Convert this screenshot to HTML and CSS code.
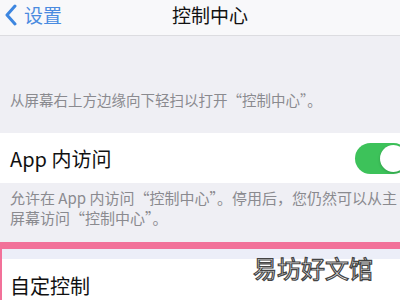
FILE: index.html
```html
<!DOCTYPE html>
<html lang="zh-CN">
<head>
    <meta charset="UTF-8">
    <meta name="viewport" content="width=device-width, initial-scale=1.0">
    <title>控制中心</title>
    <link rel="stylesheet" href="styles.css">
</head>
<body>
    <div class="screen">
        <div class="nav-bar">
            <div class="nav-back">
                <svg class="chevron" width="14" height="22" viewBox="0 0 14 22">
                    <path d="M11 2 L3 11 L11 20" fill="none" stroke="#3d86e0" stroke-width="3" stroke-linecap="round" stroke-linejoin="round"/>
                </svg>
                <span>设置</span>
            </div>
            <div class="nav-title">控制中心</div>
        </div>

        <div class="group-header">从屏幕右上方边缘向下轻扫以打开“控制中心”。</div>

        <div class="cell">
            <span class="cell-label">App 内访问</span>
            <div class="switch on"><div class="knob"></div></div>
        </div>

        <div class="group-footer">
            <span class="line">允许在 App 内访问“控制中心”。停用后，您仍然可以从主</span>
            <span class="line">屏幕访问“控制中心”。</span>
        </div>

        <div class="highlight">
            <div class="highlight-strip"></div>
            <div class="cell custom">
                <span class="cell-label">自定控制</span>
            </div>
        </div>

        <div class="watermark">易坊好文馆</div>
    </div>
</body>
</html>
```

FILE: styles.css
```css
body {
    margin: 0;
    padding: 0;
    font-family: "Noto Sans CJK SC", "Noto Sans", sans-serif;
    background-color: #efeff4;
}

.screen {
    position: relative;
    width: 400px;
    height: 300px;
    overflow: hidden;
    background-color: #efeff4;
}

.nav-bar {
    display: flex;
    align-items: center;
    height: 35px;
    background-color: #f8f8fa;
    border-bottom: 1px solid #dcdce0;
}

.nav-back {
    display: flex;
    align-items: center;
    width: 172px;
    color: #4a8be0;
    font-size: 19px;
    line-height: 24px;
    margin-top: -6px;
}

.chevron {
    margin-left: 4px;
    margin-right: 6px;
}

.nav-title {
    font-size: 19px;
    line-height: 24px;
    color: #111;
    margin-top: -6px;
}

.group-header {
    padding: 54px 10px 23px;
    font-size: 14.5px;
    line-height: 20px;
    color: #8a8a8f;
    white-space: nowrap;
}

.cell {
    display: flex;
    align-items: center;
    justify-content: space-between;
    height: 50px;
    padding-left: 10px;
    background-color: #fff;
}

.cell-label {
    font-size: 20px;
    color: #111;
}

.switch {
    flex-shrink: 0;
    width: 54px;
    height: 31px;
    border-radius: 16px;
    background-color: #3dc25a;
    margin-right: -9px;
    display: flex;
    align-items: center;
    justify-content: flex-end;
}

.knob {
    width: 27px;
    height: 27px;
    border-radius: 50%;
    background-color: #fff;
    margin-right: 2px;
    box-shadow: 0 1px 3px rgba(0, 0, 0, 0.2);
}

.group-footer {
    padding: 5px 0 14px 10px;
    font-size: 15px;
    line-height: 20px;
    color: #8a8a8f;
}

.group-footer .line {
    display: block;
    white-space: nowrap;
}

.highlight {
    border-top: 7px solid #f27199;
    border-left: 2px solid #f27199;
    background-color: #fff;
}

.highlight-strip {
    height: 10px;
    background-color: #eceef8;
}

.cell.custom {
    height: 60px;
    align-items: flex-start;
    padding-left: 8px;
    padding-top: 13px;
    box-sizing: border-box;
}

.cell.custom .cell-label {
    font-size: 20px;
    line-height: 28px;
}

/* watermark over the content */
.watermark {
    position: absolute;
    left: 253px;
    top: 253px;
    font-size: 24px;
    line-height: 30px;
    color: #fff;
    -webkit-text-stroke: 1.2px #444;
}
```
